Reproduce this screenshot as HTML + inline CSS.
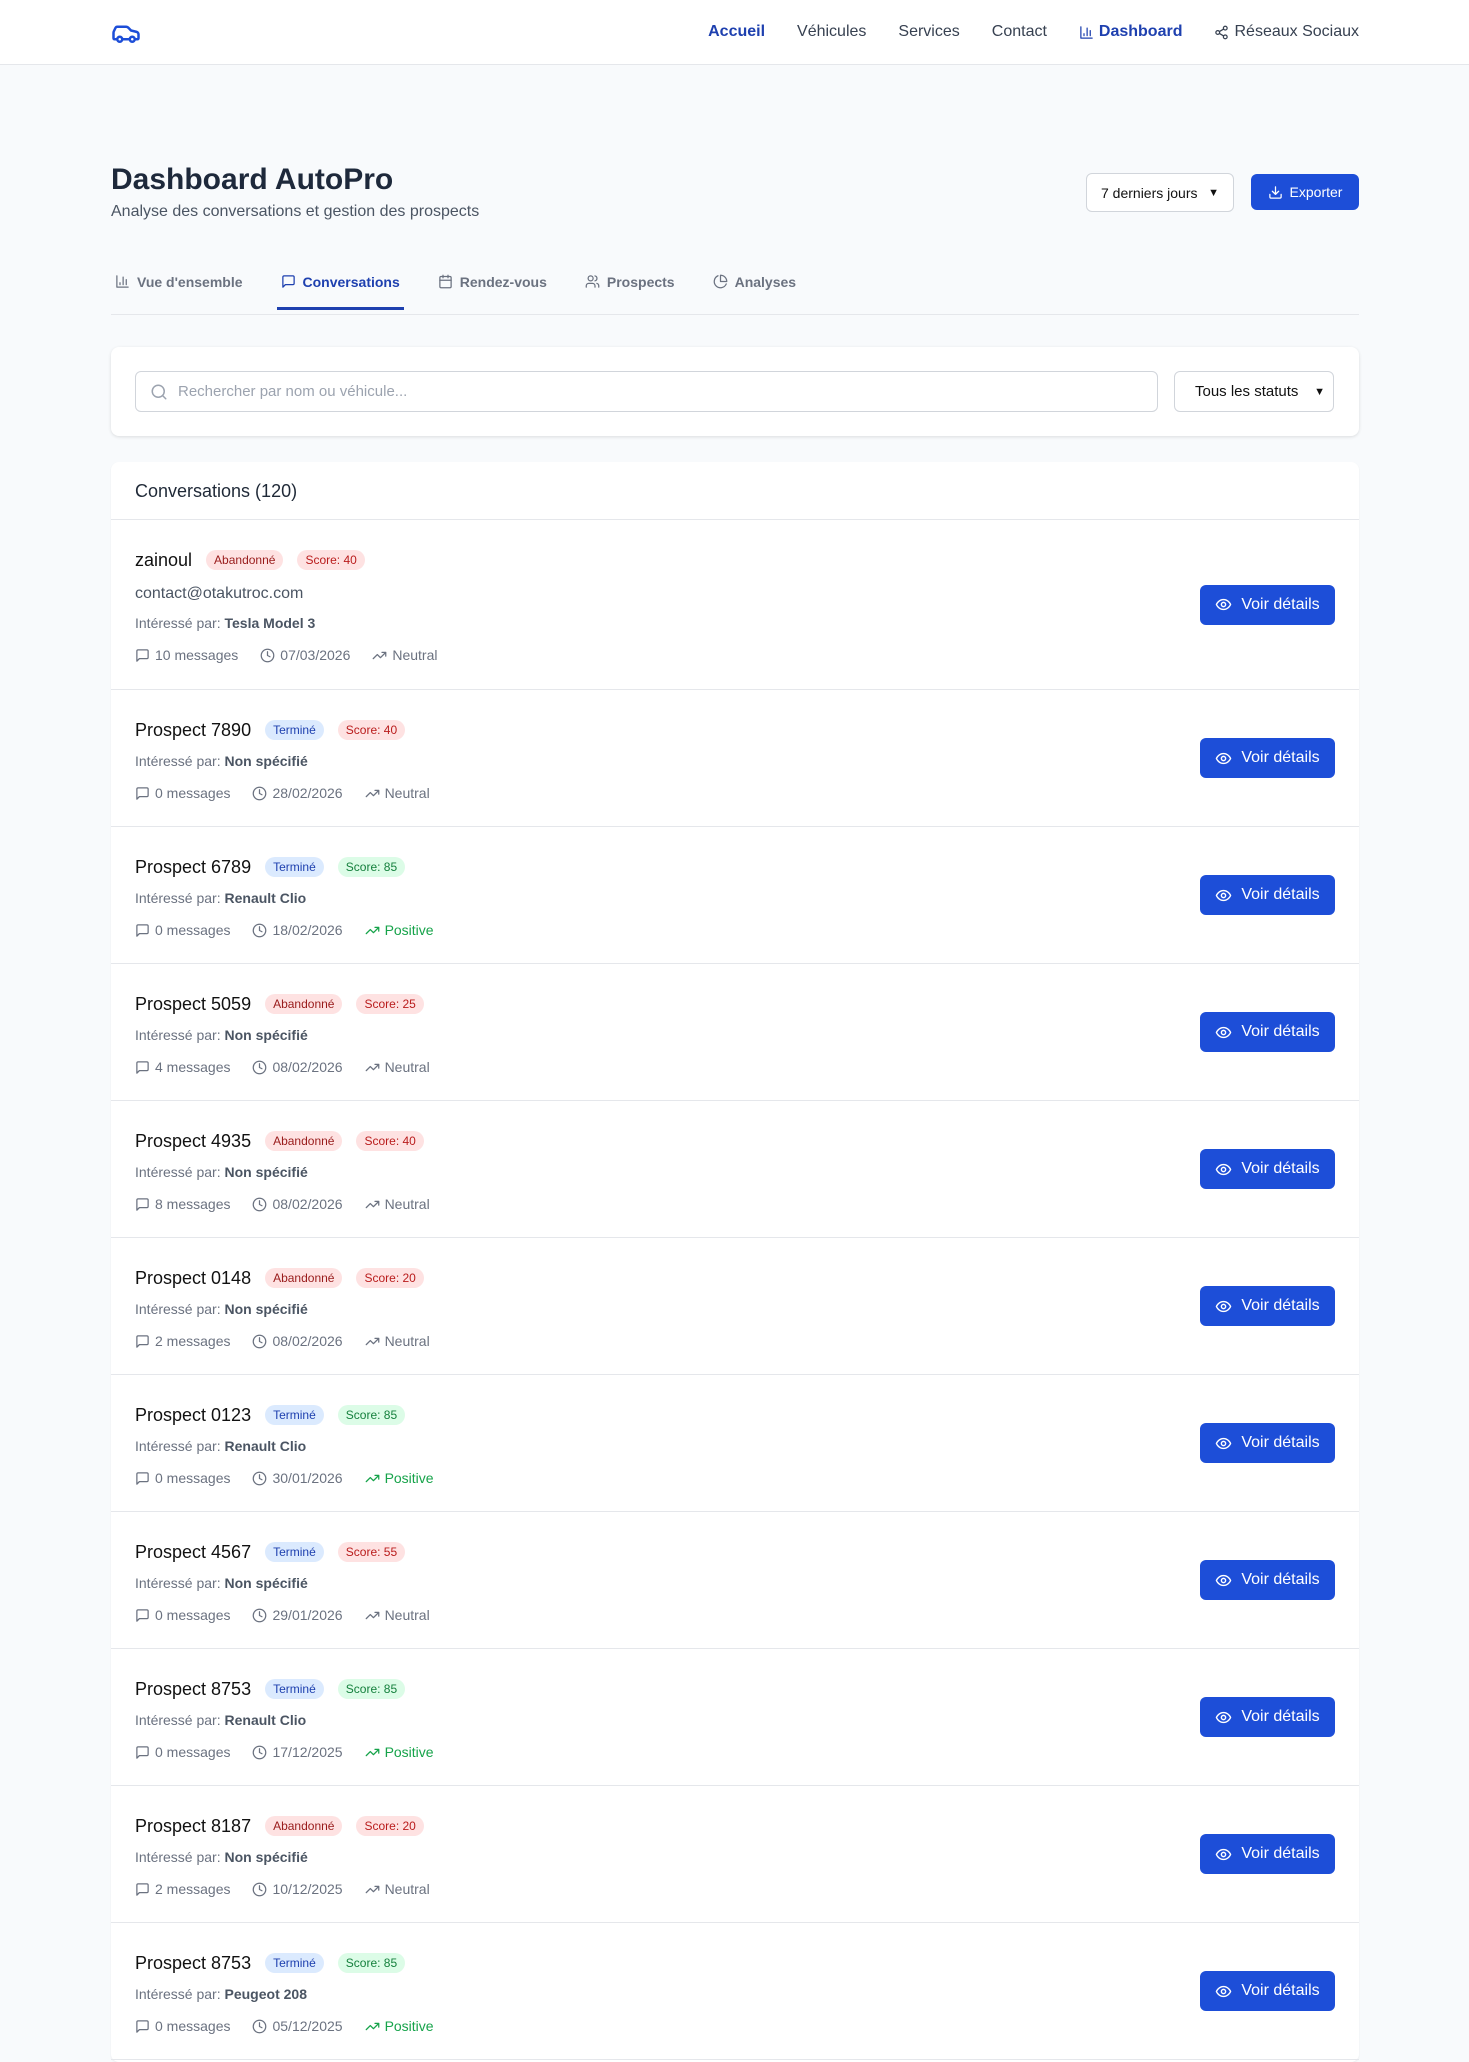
<!DOCTYPE html>
<html><head><meta charset="utf-8"><style>
*{box-sizing:border-box;margin:0;padding:0}
body{width:1469px;height:2000px;overflow:hidden;background:#f8fafc;font-family:"Liberation Sans",sans-serif;color:#0f172a}
svg{display:inline-block;vertical-align:middle;fill:none;stroke:currentColor;stroke-width:2;stroke-linecap:round;stroke-linejoin:round}
.nav{height:65px;background:#fff;border-bottom:1px solid #e5e7eb;position:relative}
.nav .logo{position:absolute;left:111px;top:18px;color:#1d4ed8}
.nav .links{position:absolute;right:110px;top:0;height:64px;display:flex;align-items:center;gap:32px;font-size:16px;color:#374151}
.nav .links a{display:flex;align-items:center;gap:5px}
.blue{color:#1e40af}
.wrap{position:absolute;left:111px;width:1248px}
h1{font-size:30px;font-weight:bold;color:#1e293b;position:absolute;top:163px;left:111px}
.sub{position:absolute;top:203px;left:111px;font-size:16px;color:#4b5563}
.sel{position:absolute;left:1086px;top:173px;width:148px;height:39px;border:1px solid #d1d5db;border-radius:6px;background:#fff;font-size:14px;padding:0 14px;display:flex;align-items:center;justify-content:space-between;color:#111}
.exp{position:absolute;left:1251px;top:174px;width:108px;height:36px;background:#1d4ed8;color:#fff;border-radius:6px;font-size:14px;display:flex;align-items:center;justify-content:center;gap:7px}
.tabs{top:265px;height:50px;border-bottom:1px solid #e5e7eb;display:flex;gap:0}
.tab{display:flex;align-items:center;gap:7px;height:49px;font-size:14px;font-weight:bold;color:#6b7280;padding:0 4px;margin-right:30px;position:relative;top:-8px}
.tab.on{color:#1e40af}
.tab.on:after{content:"";position:absolute;left:0;right:0;bottom:-4px;height:3px;background:#1e40af}
.card{background:#fff;border-radius:8px;box-shadow:0 1px 3px rgba(0,0,0,.12)}
.search{top:347px;height:89px}
.inp{position:absolute;left:24px;top:24px;width:1023px;height:41px;border:1px solid #d1d5db;border-radius:6px;display:flex;align-items:center;padding-left:14px;gap:10px;color:#9ca3af;font-size:15px}
.st{position:absolute;left:1063px;top:24px;width:160px;height:41px;border:1px solid #d1d5db;border-radius:6px;display:flex;align-items:center;justify-content:space-between;padding:0 8px 0 20px;font-size:15px;color:#111}
.list{top:462px;height:1600px;box-shadow:0 1px 2px rgba(0,0,0,.06)}
.lh{height:58px;border-bottom:1px solid #e5e7eb;padding-left:24px;font-size:18px;line-height:58px;color:#1f2937}
.row{position:relative;border-bottom:1px solid #e5e7eb;padding:28px 24px 23px}
.nm{height:24px;display:flex;align-items:center;gap:14px;font-size:18px;color:#111}
.b{font-size:12px;padding:3px 8px;border-radius:10px}
.r{background:#fee2e2;color:#991b1b}.rs{background:#fee2e2;color:#b91c1c}
.t{background:#dbeafe;color:#1e40af}.g{background:#dcfce7;color:#15803d}
.ln{height:20px;line-height:20px;font-size:14px;color:#6b7280;margin-top:9px}
.ln b{font-weight:bold;color:#4b5563}
.em{height:20px;line-height:20px;font-size:16px;color:#4b5563;margin-top:12px}
.meta{height:20px;margin-top:12px;display:flex;gap:22px;font-size:14px;color:#6b7280}
.meta span{display:flex;align-items:center;gap:5px}
.pos{color:#16a34a}
.btn{position:absolute;right:24px;top:50%;margin-top:-20px;width:135px;height:40px;background:#1d4ed8;color:#fff;border-radius:6px;font-size:16px;display:flex;align-items:center;justify-content:center;gap:9px}
</style></head><body>
<div class="nav">
<div class="logo"><svg width="30" height="30" viewBox="0 0 24 24"><path d="M19 17h2c.6 0 1-.4 1-1v-3c0-.9-.7-1.7-1.5-1.9C18.7 10.6 16 10 16 10s-1.3-1.4-2.2-2.3c-.5-.4-1.1-.7-1.8-.7H5c-.6 0-1.1.4-1.4.9l-1.4 2.900A3.7 3.7 0 0 0 2 12v4c0 .6.4 1 1 1h2"/><circle cx="7" cy="17" r="2"/><path d="M9 17h6"/><circle cx="17" cy="17" r="2"/></svg></div>
<div class="links"><a class="blue" style="font-weight:bold">Accueil</a><a>Véhicules</a><a>Services</a><a>Contact</a><a class="blue" style="font-weight:bold"><svg width="15" height="15" viewBox="0 0 24 24"><path d="M3 3v18h18M18 17V9M13 17V5M8 17v-3"/></svg>Dashboard</a><a><svg width="15" height="15" viewBox="0 0 24 24"><circle cx="18" cy="5" r="3"/><circle cx="6" cy="12" r="3"/><circle cx="18" cy="19" r="3"/><path d="m8.6 13.5 6.8 4M15.4 6.5l-6.8 4"/></svg>Réseaux Sociaux</a></div>
</div>
<h1>Dashboard AutoPro</h1>
<div class="sub">Analyse des conversations et gestion des prospects</div>
<div class="sel">7 derniers jours <span style="font-size:11px">&#9660;</span></div>
<div class="exp"><svg width="15" height="15" viewBox="0 0 24 24"><path d="M21 15v4a2 2 0 0 1-2 2H5a2 2 0 0 1-2-2v-4M7 10l5 5 5-5M12 15V3"/></svg>Exporter</div>
<div class="wrap tabs">
<div class="tab"><svg width="15" height="15" viewBox="0 0 24 24"><path d="M3 3v18h18M18 17V9M13 17V5M8 17v-3"/></svg>Vue d'ensemble</div>
<div class="tab on"><svg width="15" height="15" viewBox="0 0 24 24"><path d="M21 15a2 2 0 0 1-2 2H7l-4 4V5a2 2 0 0 1 2-2h14a2 2 0 0 1 2 2z"/></svg>Conversations</div>
<div class="tab"><svg width="15" height="15" viewBox="0 0 24 24"><rect x="3" y="4" width="18" height="18" rx="2"/><path d="M16 2v4M8 2v4M3 10h18"/></svg>Rendez-vous</div>
<div class="tab"><svg width="15" height="15" viewBox="0 0 24 24"><path d="M16 21v-2a4 4 0 0 0-4-4H6a4 4 0 0 0-4 4v2"/><circle cx="9" cy="7" r="4"/><path d="M22 21v-2a4 4 0 0 0-3-3.9M16 3.1a4 4 0 0 1 0 7.8"/></svg>Prospects</div>
<div class="tab"><svg width="15" height="15" viewBox="0 0 24 24"><path d="M21.2 15.9A10 10 0 1 1 8 2.8"/><path d="M22 12A10 10 0 0 0 12 2v10z"/></svg>Analyses</div>
</div>
<div class="wrap card search">
<div class="inp"><svg width="18" height="18" viewBox="0 0 24 24"><circle cx="11" cy="11" r="8"/><path d="m21 21-4.3-4.3"/></svg>Rechercher par nom ou véhicule...</div>
<div class="st">Tous les statuts <span style="font-size:11px">&#9660;</span></div>
</div>
<div class="wrap card list">
<div class="lh">Conversations (120)</div>
<div class="row" style="padding-bottom:24px"><div class="nm">zainoul <span class="b r">Abandonné</span><span class="b rs">Score: 40</span></div><div class="em">contact@otakutroc.com</div><div class="ln">Intéressé par: <b>Tesla Model 3</b></div><div class="meta"><span><svg width="15" height="15" viewBox="0 0 24 24"><path d="M21 15a2 2 0 0 1-2 2H7l-4 4V5a2 2 0 0 1 2-2h14a2 2 0 0 1 2 2z"/></svg>10 messages</span><span><svg width="15" height="15" viewBox="0 0 24 24"><circle cx="12" cy="12" r="10"/><path d="M12 6v6l4 2"/></svg>07/03/2026</span><span><svg width="15" height="15" viewBox="0 0 24 24"><path d="m22 7-8.5 8.5-5-5L2 17M16 7h6v6"/></svg>Neutral</span></div><div class="btn"><svg width="17" height="17" viewBox="0 0 24 24"><path d="M2 12s3-7 10-7 10 7 10 7-3 7-10 7-10-7-10-7z"/><circle cx="12" cy="12" r="3"/></svg>Voir détails</div></div>
<div class="row"><div class="nm">Prospect 7890 <span class="b t">Terminé</span><span class="b rs">Score: 40</span></div><div class="ln">Intéressé par: <b>Non spécifié</b></div><div class="meta"><span><svg width="15" height="15" viewBox="0 0 24 24"><path d="M21 15a2 2 0 0 1-2 2H7l-4 4V5a2 2 0 0 1 2-2h14a2 2 0 0 1 2 2z"/></svg>0 messages</span><span><svg width="15" height="15" viewBox="0 0 24 24"><circle cx="12" cy="12" r="10"/><path d="M12 6v6l4 2"/></svg>28/02/2026</span><span><svg width="15" height="15" viewBox="0 0 24 24"><path d="m22 7-8.5 8.5-5-5L2 17M16 7h6v6"/></svg>Neutral</span></div><div class="btn"><svg width="17" height="17" viewBox="0 0 24 24"><path d="M2 12s3-7 10-7 10 7 10 7-3 7-10 7-10-7-10-7z"/><circle cx="12" cy="12" r="3"/></svg>Voir détails</div></div>
<div class="row"><div class="nm">Prospect 6789 <span class="b t">Terminé</span><span class="b g">Score: 85</span></div><div class="ln">Intéressé par: <b>Renault Clio</b></div><div class="meta"><span><svg width="15" height="15" viewBox="0 0 24 24"><path d="M21 15a2 2 0 0 1-2 2H7l-4 4V5a2 2 0 0 1 2-2h14a2 2 0 0 1 2 2z"/></svg>0 messages</span><span><svg width="15" height="15" viewBox="0 0 24 24"><circle cx="12" cy="12" r="10"/><path d="M12 6v6l4 2"/></svg>18/02/2026</span><span class="pos"><svg width="15" height="15" viewBox="0 0 24 24"><path d="m22 7-8.5 8.5-5-5L2 17M16 7h6v6"/></svg>Positive</span></div><div class="btn"><svg width="17" height="17" viewBox="0 0 24 24"><path d="M2 12s3-7 10-7 10 7 10 7-3 7-10 7-10-7-10-7z"/><circle cx="12" cy="12" r="3"/></svg>Voir détails</div></div>
<div class="row"><div class="nm">Prospect 5059 <span class="b r">Abandonné</span><span class="b rs">Score: 25</span></div><div class="ln">Intéressé par: <b>Non spécifié</b></div><div class="meta"><span><svg width="15" height="15" viewBox="0 0 24 24"><path d="M21 15a2 2 0 0 1-2 2H7l-4 4V5a2 2 0 0 1 2-2h14a2 2 0 0 1 2 2z"/></svg>4 messages</span><span><svg width="15" height="15" viewBox="0 0 24 24"><circle cx="12" cy="12" r="10"/><path d="M12 6v6l4 2"/></svg>08/02/2026</span><span><svg width="15" height="15" viewBox="0 0 24 24"><path d="m22 7-8.5 8.5-5-5L2 17M16 7h6v6"/></svg>Neutral</span></div><div class="btn"><svg width="17" height="17" viewBox="0 0 24 24"><path d="M2 12s3-7 10-7 10 7 10 7-3 7-10 7-10-7-10-7z"/><circle cx="12" cy="12" r="3"/></svg>Voir détails</div></div>
<div class="row"><div class="nm">Prospect 4935 <span class="b r">Abandonné</span><span class="b rs">Score: 40</span></div><div class="ln">Intéressé par: <b>Non spécifié</b></div><div class="meta"><span><svg width="15" height="15" viewBox="0 0 24 24"><path d="M21 15a2 2 0 0 1-2 2H7l-4 4V5a2 2 0 0 1 2-2h14a2 2 0 0 1 2 2z"/></svg>8 messages</span><span><svg width="15" height="15" viewBox="0 0 24 24"><circle cx="12" cy="12" r="10"/><path d="M12 6v6l4 2"/></svg>08/02/2026</span><span><svg width="15" height="15" viewBox="0 0 24 24"><path d="m22 7-8.5 8.5-5-5L2 17M16 7h6v6"/></svg>Neutral</span></div><div class="btn"><svg width="17" height="17" viewBox="0 0 24 24"><path d="M2 12s3-7 10-7 10 7 10 7-3 7-10 7-10-7-10-7z"/><circle cx="12" cy="12" r="3"/></svg>Voir détails</div></div>
<div class="row"><div class="nm">Prospect 0148 <span class="b r">Abandonné</span><span class="b rs">Score: 20</span></div><div class="ln">Intéressé par: <b>Non spécifié</b></div><div class="meta"><span><svg width="15" height="15" viewBox="0 0 24 24"><path d="M21 15a2 2 0 0 1-2 2H7l-4 4V5a2 2 0 0 1 2-2h14a2 2 0 0 1 2 2z"/></svg>2 messages</span><span><svg width="15" height="15" viewBox="0 0 24 24"><circle cx="12" cy="12" r="10"/><path d="M12 6v6l4 2"/></svg>08/02/2026</span><span><svg width="15" height="15" viewBox="0 0 24 24"><path d="m22 7-8.5 8.5-5-5L2 17M16 7h6v6"/></svg>Neutral</span></div><div class="btn"><svg width="17" height="17" viewBox="0 0 24 24"><path d="M2 12s3-7 10-7 10 7 10 7-3 7-10 7-10-7-10-7z"/><circle cx="12" cy="12" r="3"/></svg>Voir détails</div></div>
<div class="row"><div class="nm">Prospect 0123 <span class="b t">Terminé</span><span class="b g">Score: 85</span></div><div class="ln">Intéressé par: <b>Renault Clio</b></div><div class="meta"><span><svg width="15" height="15" viewBox="0 0 24 24"><path d="M21 15a2 2 0 0 1-2 2H7l-4 4V5a2 2 0 0 1 2-2h14a2 2 0 0 1 2 2z"/></svg>0 messages</span><span><svg width="15" height="15" viewBox="0 0 24 24"><circle cx="12" cy="12" r="10"/><path d="M12 6v6l4 2"/></svg>30/01/2026</span><span class="pos"><svg width="15" height="15" viewBox="0 0 24 24"><path d="m22 7-8.5 8.5-5-5L2 17M16 7h6v6"/></svg>Positive</span></div><div class="btn"><svg width="17" height="17" viewBox="0 0 24 24"><path d="M2 12s3-7 10-7 10 7 10 7-3 7-10 7-10-7-10-7z"/><circle cx="12" cy="12" r="3"/></svg>Voir détails</div></div>
<div class="row"><div class="nm">Prospect 4567 <span class="b t">Terminé</span><span class="b rs">Score: 55</span></div><div class="ln">Intéressé par: <b>Non spécifié</b></div><div class="meta"><span><svg width="15" height="15" viewBox="0 0 24 24"><path d="M21 15a2 2 0 0 1-2 2H7l-4 4V5a2 2 0 0 1 2-2h14a2 2 0 0 1 2 2z"/></svg>0 messages</span><span><svg width="15" height="15" viewBox="0 0 24 24"><circle cx="12" cy="12" r="10"/><path d="M12 6v6l4 2"/></svg>29/01/2026</span><span><svg width="15" height="15" viewBox="0 0 24 24"><path d="m22 7-8.5 8.5-5-5L2 17M16 7h6v6"/></svg>Neutral</span></div><div class="btn"><svg width="17" height="17" viewBox="0 0 24 24"><path d="M2 12s3-7 10-7 10 7 10 7-3 7-10 7-10-7-10-7z"/><circle cx="12" cy="12" r="3"/></svg>Voir détails</div></div>
<div class="row"><div class="nm">Prospect 8753 <span class="b t">Terminé</span><span class="b g">Score: 85</span></div><div class="ln">Intéressé par: <b>Renault Clio</b></div><div class="meta"><span><svg width="15" height="15" viewBox="0 0 24 24"><path d="M21 15a2 2 0 0 1-2 2H7l-4 4V5a2 2 0 0 1 2-2h14a2 2 0 0 1 2 2z"/></svg>0 messages</span><span><svg width="15" height="15" viewBox="0 0 24 24"><circle cx="12" cy="12" r="10"/><path d="M12 6v6l4 2"/></svg>17/12/2025</span><span class="pos"><svg width="15" height="15" viewBox="0 0 24 24"><path d="m22 7-8.5 8.5-5-5L2 17M16 7h6v6"/></svg>Positive</span></div><div class="btn"><svg width="17" height="17" viewBox="0 0 24 24"><path d="M2 12s3-7 10-7 10 7 10 7-3 7-10 7-10-7-10-7z"/><circle cx="12" cy="12" r="3"/></svg>Voir détails</div></div>
<div class="row"><div class="nm">Prospect 8187 <span class="b r">Abandonné</span><span class="b rs">Score: 20</span></div><div class="ln">Intéressé par: <b>Non spécifié</b></div><div class="meta"><span><svg width="15" height="15" viewBox="0 0 24 24"><path d="M21 15a2 2 0 0 1-2 2H7l-4 4V5a2 2 0 0 1 2-2h14a2 2 0 0 1 2 2z"/></svg>2 messages</span><span><svg width="15" height="15" viewBox="0 0 24 24"><circle cx="12" cy="12" r="10"/><path d="M12 6v6l4 2"/></svg>10/12/2025</span><span><svg width="15" height="15" viewBox="0 0 24 24"><path d="m22 7-8.5 8.5-5-5L2 17M16 7h6v6"/></svg>Neutral</span></div><div class="btn"><svg width="17" height="17" viewBox="0 0 24 24"><path d="M2 12s3-7 10-7 10 7 10 7-3 7-10 7-10-7-10-7z"/><circle cx="12" cy="12" r="3"/></svg>Voir détails</div></div>
<div class="row"><div class="nm">Prospect 8753 <span class="b t">Terminé</span><span class="b g">Score: 85</span></div><div class="ln">Intéressé par: <b>Peugeot 208</b></div><div class="meta"><span><svg width="15" height="15" viewBox="0 0 24 24"><path d="M21 15a2 2 0 0 1-2 2H7l-4 4V5a2 2 0 0 1 2-2h14a2 2 0 0 1 2 2z"/></svg>0 messages</span><span><svg width="15" height="15" viewBox="0 0 24 24"><circle cx="12" cy="12" r="10"/><path d="M12 6v6l4 2"/></svg>05/12/2025</span><span class="pos"><svg width="15" height="15" viewBox="0 0 24 24"><path d="m22 7-8.5 8.5-5-5L2 17M16 7h6v6"/></svg>Positive</span></div><div class="btn"><svg width="17" height="17" viewBox="0 0 24 24"><path d="M2 12s3-7 10-7 10 7 10 7-3 7-10 7-10-7-10-7z"/><circle cx="12" cy="12" r="3"/></svg>Voir détails</div></div>
</div>
</body></html>
